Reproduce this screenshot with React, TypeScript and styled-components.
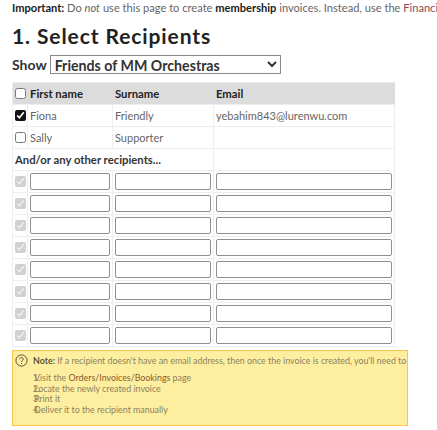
import React, { FC } from "react";
import styled, { createGlobalStyle } from "styled-components";

const GlobalStyle = createGlobalStyle`
  html, body {
    margin: 0;
    padding: 0;
    background: #fff;
    overflow: hidden;
  }
  body {
    font-family: Lato, "Open Sans", sans-serif;
    color: #555;
  }
`;

const extraRows = [0, 1, 2, 3, 4, 5, 6, 7];

const QuestionIcon: FC = () => (
  <svg width="13" height="13" viewBox="0 0 13 13" fill="none" stroke="#5b5334" strokeWidth="1">
    <circle cx="6.5" cy="6.5" r="5.6" />
    <path d="M4.7 5.2c0-1 .8-1.7 1.8-1.7s1.8.7 1.8 1.6c0 1.3-1.8 1.3-1.8 2.8" />
    <path d="M6.5 9v1" />
  </svg>
);

const App: FC = () => {
  return (
    <Page>
      <GlobalStyle />
      <Intro>
        <strong>Important:</strong> Do <em>not</em> use this page to create <strong>membership</strong> invoices.
        Instead, use the <IntroLink>Financial</IntroLink>
      </Intro>
      <Heading>1. Select Recipients</Heading>
      <ShowRow>
        <span>Show</span>
        <GroupSelect defaultValue="friends">
          <option value="friends">Friends of MM Orchestras</option>
        </GroupSelect>
      </ShowRow>
      <Table>
        <colgroup>
          <col style={{ width: 15 }} />
          <col style={{ width: 85 }} />
          <col style={{ width: 101 }} />
          <col style={{ width: 181 }} />
        </colgroup>
        <thead>
          <tr>
            <HeadCell>
              <Check type="checkbox" />
            </HeadCell>
            <HeadCell>First name</HeadCell>
            <HeadCell>Surname</HeadCell>
            <HeadCell>Email</HeadCell>
          </tr>
        </thead>
        <tbody>
          <tr>
            <Cell>
              <Check type="checkbox" defaultChecked $dark />
            </Cell>
            <Cell>Fiona</Cell>
            <Cell>Friendly</Cell>
            <Cell>yebahim843@lurenwu.com</Cell>
          </tr>
          <tr>
            <Cell>
              <Check type="checkbox" />
            </Cell>
            <Cell>Sally</Cell>
            <Cell>Supporter</Cell>
            <Cell />
          </tr>
          <tr>
            <OthersCell colSpan={3}>And/or any other recipients...</OthersCell>
            <Cell />
          </tr>
          {extraRows.map((n) => (
            <tr key={n}>
              <Cell>
                <Check type="checkbox" defaultChecked disabled />
              </Cell>
              <Cell $input>
                <TextInput type="text" />
              </Cell>
              <Cell $input>
                <TextInput type="text" />
              </Cell>
              <Cell $input>
                <TextInput type="text" />
              </Cell>
            </tr>
          ))}
        </tbody>
      </Table>
      <Note>
        <NoteIcon>
          <QuestionIcon />
        </NoteIcon>
        <NoteLine>
          <strong>Note:</strong> If a recipient doesn't have an email address, then once the invoice is created, you'll need to
        </NoteLine>
        <Steps>
          <li>
            Visit the <StepLink>Orders/Invoices/Bookings</StepLink> page
          </li>
          <li>Locate the newly created invoice</li>
          <li>Print it</li>
          <li>Deliver it to the recipient manually</li>
        </Steps>
      </Note>
    </Page>
  );
};

const Page = styled.div`
  width: 437px;
  height: 430px;
  overflow: hidden;
  padding: 0 0 0 12px;
  box-sizing: border-box;
`;

const Intro = styled.p`
  margin: 0;
  padding-top: 1px;
  width: 460px;
  font-size: 11.1px;
  line-height: 14px;
  white-space: nowrap;
  color: #666;

  strong {
    color: #222;
    font-weight: 700;
  }
`;

const IntroLink = styled.span`
  color: #8a4a5a;
`;

const Heading = styled.h1`
  margin: 8px 0 0;
  font-size: 21px;
  line-height: 26px;
  font-weight: 700;
  letter-spacing: 0.9px;
  color: #222;
`;

const ShowRow = styled.div`
  display: flex;
  align-items: center;
  gap: 3px;
  margin-top: 6px;
  height: 19px;
  font-size: 14px;
  font-weight: 700;
  color: #333;
`;

const GroupSelect = styled.select`
  width: 231px;
  height: 19px;
  padding: 0;
  border: 1px solid #8a8a8a;
  background: #fff;
  font-family: inherit;
  font-size: 14.2px;
  font-weight: 700;
  color: #333;
`;

const Table = styled.table`
  margin-top: 8px;
  width: 382px;
  border-collapse: collapse;
  table-layout: fixed;
  font-size: 11px;
`;

const HeadCell = styled.th`
  height: 22px;
  padding: 0 0 0 2px;
  border: 1px solid #eee;
  border-right-color: #dcdcdc;
  background: #dcdcdc;
  box-sizing: border-box;
  text-align: left;
  font-size: 11.3px;
  font-weight: 700;
  color: #222;
`;

const Cell = styled.td<{ $input?: boolean }>`
  height: 22px;
  padding: 0 ${(p) => (p.$input ? "2px" : "0")} 0 2px;
  border: 1px solid #eee;
  box-sizing: border-box;
  color: #666;
`;

const OthersCell = styled.td`
  height: 22px;
  padding: 0 0 0 2px;
  border: 1px solid #eee;
  box-sizing: border-box;
  font-size: 11.3px;
  font-weight: 700;
  color: #333;
`;

const Check = styled.input<{ $dark?: boolean }>`
  display: block;
  width: 11px;
  height: 11px;
  margin: 0;
  accent-color: ${(p) => (p.$dark ? "#111" : "auto")};
`;

const TextInput = styled.input`
  display: block;
  width: 100%;
  height: 17px;
  box-sizing: border-box;
  padding: 0 2px;
  border: 1px solid #8f8f8f;
  border-radius: 2px;
  background: #fff;
`;

const Note = styled.div`
  position: relative;
  box-sizing: border-box;
  width: 396px;
  height: 76px;
  margin-top: 3px;
  padding: 4px 0 0 20px;
  border: 1px solid #fcc44c;
  background: #feeea0;
  font-size: 8.85px;
  color: #8a8360;
`;

const NoteIcon = styled.span`
  position: absolute;
  left: 2px;
  top: 3px;
  display: block;
  height: 13px;
`;

const NoteLine = styled.div`
  line-height: 12px;
  white-space: nowrap;

  strong {
    color: #5b5334;
  }
`;

const Steps = styled.ol`
  list-style: none;
  margin: 6px 0 0;
  padding: 0 0 0 1px;
  counter-reset: step;

  li {
    position: relative;
    counter-increment: step;
    line-height: 10.6px;
  }

  li::before {
    content: counter(step) ".";
    position: absolute;
    left: -1px;
    top: 0;
  }
`;

const StepLink = styled.span`
  color: #8a5a28;
`;

export default App;
